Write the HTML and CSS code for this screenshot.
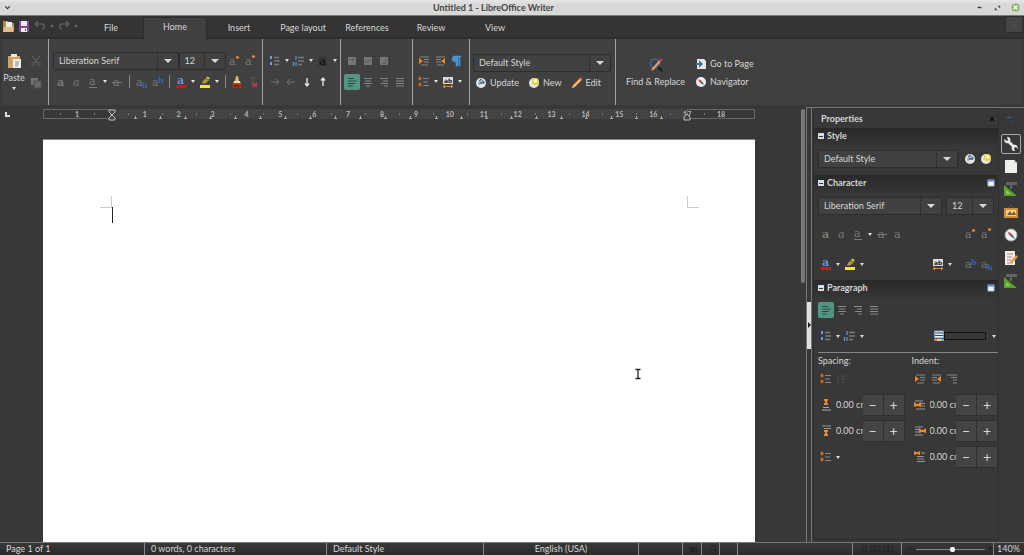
FILE: index.html
```html
<!DOCTYPE html>
<html lang="en">
<head>
<meta charset="utf-8">
<title>Untitled 1 - LibreOffice Writer</title>
<link rel="stylesheet" href="styles.css">
</head>
<body>
<svg class="sprite" aria-hidden="true">
  <symbol id="bold" viewBox="0 0 16 16"><text class="glyph strong" x="4" y="12">a</text></symbol>
  <symbol id="italic" viewBox="0 0 16 16"><text class="glyph slant" x="4" y="12">a</text></symbol>
  <symbol id="under" viewBox="0 0 16 16"><text class="glyph" x="4" y="11">a</text><path d="M4 13.5h8" stroke="#777c78"/></symbol>
  <symbol id="strike" viewBox="0 0 16 16"><text class="glyph" x="4" y="12">a</text><path d="M3 8.5h10" stroke="#777c78"/></symbol>
  <symbol id="plain" viewBox="0 0 16 16"><text class="glyph" x="4" y="12">a</text></symbol>
  <symbol id="sub" viewBox="0 0 16 16"><text class="glyph" x="3" y="12">a</text><text class="small" x="9" y="14">b</text></symbol>
  <symbol id="super" viewBox="0 0 16 16"><text class="glyph" x="3" y="12">a</text><text class="small" x="9" y="9">b</text></symbol>
  <symbol id="grow" viewBox="0 0 16 16"><text class="glyph" x="3" y="12">a</text><path d="M10 5l1.500-2L13 5z" fill="#f08a35" stroke="#f08a35"/></symbol>
  <symbol id="shrink" viewBox="0 0 16 16"><text class="glyph" x="3" y="12">a</text><path d="M10 3h3l-1.500 2z" fill="#f08a35" stroke="#f08a35"/></symbol>
  <symbol id="color" viewBox="0 0 16 16"><text class="glyph blue" x="4" y="10">a</text><path d="M3 11h10v3H3z" fill="#cf171f"/></symbol>
  <symbol id="mark" viewBox="0 0 16 16"><path d="M3 11h10v3H3z" fill="#fcf000"/><path d="M5 10l1-3 3-3 3 2-3 3z" fill="#b09a30"/><path d="M8 5l2-3 3 2-1 3z" fill="#77713f"/><circle cx="11" cy="4" r="1" fill="#f4e34c"/></symbol>
  <symbol id="brush" viewBox="0 0 16 16"><path d="M7 2h2l1 5H6z" fill="#e6b46a"/><path d="M5 7h6l1 3H4z" fill="#e8d9b4"/><path d="M4 9h8v1H4z" fill="#8a5a32"/><path d="M4 10h8l1 4H3z" fill="#b2261e"/><path d="M5 12h5" stroke="#4b1512"/></symbol>
  <symbol id="clear" viewBox="0 0 16 16"><path d="M5 4h6M9 4l-3 8" stroke="#59595b"/><path d="M8 9l4 4m0-4l-4 4" stroke="#c83c55" stroke-width="1.5"/></symbol>
  <symbol id="bullets" viewBox="0 0 16 16"><path d="M3 3h2v3H3zM3 9h2v3H3z" fill="#6f9fd8"/><path d="M7 4.500h5M7 8h6M7 11.500h5" stroke="#777b77" stroke-width="1.300"/></symbol>
  <symbol id="numbers" viewBox="0 0 16 16"><path d="M5 3v4M2.500 9v4M5 9v4" stroke="#5c8fd0" fill="none" stroke-width="1.300"/><path d="M7 4.500h6M7 8h6M7 11.500h4" stroke="#777b77" stroke-width="1.300"/></symbol>
  <symbol id="darka" viewBox="0 0 16 16"><path d="M3 3h9v10H3z" fill="#383838"/><text class="glyph dark" x="4" y="12">a</text></symbol>
  <symbol id="right" viewBox="0 0 16 16"><path d="M4 8h8M9 5l3 3-3 3" stroke="#747474" fill="none"/></symbol>
  <symbol id="left" viewBox="0 0 16 16"><path d="M12 8H4M7 5L4 8l3 3" stroke="#747474" fill="none"/></symbol>
  <symbol id="down" viewBox="0 0 16 16"><path d="M8 4v8M6 9.500L8 12l2-2.500" stroke="#e5e5df" stroke-width="1.400" fill="none"/></symbol>
  <symbol id="up" viewBox="0 0 16 16"><path d="M8 12V4M6 6.500L8 4l2 2.500" stroke="#e5e5df" stroke-width="1.400" fill="none"/></symbol>
  <symbol id="box1" viewBox="0 0 16 16"><path d="M4 4h8v8H4z" fill="#777"/><path d="M5 6.500h4M9.500 5v4" stroke="#606060"/></symbol>
  <symbol id="box2" viewBox="0 0 16 16"><path d="M4 4h8v8H4z" fill="#777"/><path d="M5 7.500h6M5 9.500h4" stroke="#5c5c5c"/></symbol>
  <symbol id="box3" viewBox="0 0 16 16"><path d="M4 4h8v8H4z" fill="#777"/><path d="M6 10.500h4M9.500 6v4" stroke="#5c5c5c"/></symbol>
  <symbol id="aleft" viewBox="0 0 16 16"><path d="M4 4.500h6M4 7h9M4 9.500h7M4 12h5" stroke="currentColor"/></symbol>
  <symbol id="acenter" viewBox="0 0 16 16"><path d="M4 4.500h8M5 7h6M4 9.500h8M6 12h4" stroke="currentColor"/></symbol>
  <symbol id="aright" viewBox="0 0 16 16"><path d="M4 4.500h8M7 7h5M5 9.500h7M8 12h4" stroke="currentColor"/></symbol>
  <symbol id="ajust" viewBox="0 0 16 16"><path d="M4 4.500h8M4 7h8M4 9.500h8M4 12h8" stroke="currentColor"/></symbol>
  <symbol id="indent" viewBox="0 0 16 16"><path d="M4 4h9M8 6.500h5M8 9h5M5 12h7" stroke="#858985"/><path d="M3 5l4 3-4 3z" fill="#f18424"/></symbol>
  <symbol id="outdent" viewBox="0 0 16 16"><path d="M4 4h9M4 6.500h5M4 9h5M5 12h7" stroke="#858985"/><path d="M13 5L9 8l4 3z" fill="#f18424"/></symbol>
  <symbol id="hang" viewBox="0 0 16 16"><path d="M3 4h10M7 6.500h6M9 9h4M9 12h4" stroke="#858985"/></symbol>
  <symbol id="pilcrow" viewBox="0 0 16 16"><path d="M6 3h7v1h-1v9h-1V4h-1v9H8V9C5 9 4 7 4 6s1-3 2-3z" fill="#4896d0" stroke="#4896d0" stroke-width=".6"/></symbol>
  <symbol id="lines" viewBox="0 0 16 16"><path d="M3 3h2v3H3zM3 9h2v3H3zM2 5h4M2 10h4" stroke="#c96a23" fill="#c96a23" stroke-width=".5"/><path d="M7 4.500h6M7 8h5M7 11.500h6" stroke="#858985"/></symbol>
  <symbol id="faint" viewBox="0 0 16 16"><path d="M4 4v8M7 5h4M7 8h5M7 11h3" stroke="#505050"/></symbol>
  <symbol id="charspace" viewBox="0 0 16 16"><path d="M3 3h10v7H3z" fill="#deded8"/><text class="ab" x="4" y="9">ab</text><path d="M3 12.500h10M5 11l-2 1.500L5 14m6-3l2 1.500-2 1.500" stroke="#ed842b" fill="none"/></symbol>
  <symbol id="above" viewBox="0 0 16 16"><path d="M6 2h4v2H9v2h1v2H6V6h1V4H6z" fill="#f28a2d"/><path d="M5 10.500h6M4 13h9" stroke="#aaa"/></symbol>
  <symbol id="below" viewBox="0 0 16 16"><path d="M4 3h9M6 5.500h7" stroke="#999"/><path d="M6 7h4v2H9v2h1v2H6v-2h1V9H6z" fill="#f28a2d"/></symbol>
  <symbol id="before" viewBox="0 0 16 16"><path d="M3 4h8M9 6.500h4M9 9h4M4 12h9" stroke="#999"/><path d="M2 5l3 2h1l3-2v5L6 9H5l-3 1z" fill="#f28a2d"/></symbol>
  <symbol id="after" viewBox="0 0 16 16"><path d="M3 4h8M3 6.500h4M3 9h4M3 12h8" stroke="#999"/><path d="M7 5l3 2h1l3-2v5l-3-1h-1l-3 1z" fill="#f28a2d"/></symbol>
  <symbol id="first" viewBox="0 0 16 16"><path d="M9 4h4M5 7.500h7M5 10h7M5 12.500h8" stroke="#999"/><path d="M2 2l3 1.500L8 2v4L5 5 2 6z" fill="#f28a2d"/></symbol>
  <symbol id="cut" viewBox="0 0 16 16"><path d="M4 3l6 7M12 3l-6 7" stroke="#696969"/><circle cx="5" cy="11" r="1.500" fill="none" stroke="#606060"/><circle cx="11" cy="11" r="1.500" fill="none" stroke="#606060"/></symbol>
  <symbol id="copy" viewBox="0 0 16 16"><path d="M3 3h7v7H3z" fill="#747474"/><path d="M6 6h7v7H6z" fill="#696969" stroke="#515151"/></symbol>
  <symbol id="paste" viewBox="0 0 16 16"><path d="M2 3h12v12H2z" fill="#d4a45e"/><path d="M5 1h6v3H5z" fill="#e8e8e3"/><path d="M7 6h8v9H7z" fill="#eeeeec"/><path d="M9 9h4M9 11h4M9 13h3" stroke="#8b8b87"/></symbol>
  <symbol id="folder" viewBox="0 0 16 16"><path d="M3 3h5l1 2h5v9H3z" fill="#b58b58"/><path d="M6 4h6v6H6z" fill="#efeee7"/><path d="M4 9h10l-1 5H3z" fill="#dfc08d"/></symbol>
  <symbol id="disk" viewBox="0 0 16 16"><path d="M3 3h10v11H3z" fill="#874594"/><path d="M5 3h6v5H5z" fill="#f4eaf5"/><path d="M5 10h6v4H5z" fill="#eee"/><path d="M9 11h1v2H9z" fill="#555"/></symbol>
  <symbol id="undo" viewBox="0 0 16 16"><path d="M6 3L3 6l3 3M3 6h7c3 0 3 5 0 5" stroke="#5d5d5d" stroke-width="1.500" fill="none"/></symbol>
  <symbol id="redo" viewBox="0 0 16 16"><path d="M10 3l3 3-3 3M13 6H6c-3 0-3 5 0 5" stroke="#5d5d5d" stroke-width="1.500" fill="none"/></symbol>
  <symbol id="update" viewBox="0 0 16 16"><circle cx="8" cy="8" r="5" fill="#e7e7e1"/><path d="M8 3l1 4 4-1-2 3H7l-1 2-1-3z" fill="#8ba8c4"/><path d="M6 6c1-2 3-2 4 0l1 2M7 8h4" fill="none" stroke="#31506f"/></symbol>
  <symbol id="new" viewBox="0 0 16 16"><circle cx="8" cy="8" r="5" fill="#e7e7e1"/><circle cx="9.500" cy="6.500" r="3.500" fill="#e9cf31"/><circle cx="9.500" cy="6" r="2" fill="#fffbd2"/></symbol>
  <symbol id="pencil" viewBox="0 0 16 16"><path d="M3 13l1-3 7-7 2 2-7 7z" fill="#f0a04b"/><path d="M5 11l6-6" stroke="#f9d5a3"/><path d="M11 3l1-1 2 2-1 1z" fill="#d54545"/><path d="M3 13l1-2 1 1z" fill="#eee"/></symbol>
  <symbol id="find" viewBox="0 0 16 16"><circle cx="7" cy="6.500" r="4.500" fill="none" stroke="#4562ab" stroke-width="1.500"/><path d="M10 10l4 4" stroke="#171717" stroke-width="2"/><path d="M4 13l8-9" stroke="#eda259" stroke-width="2"/><path d="M12 4l2-2" stroke="#d24439" stroke-width="2"/></symbol>
  <symbol id="goto" viewBox="0 0 16 16"><path d="M4 3h7l2 2v8H4z" fill="#e8e8e3"/><path d="M3 7h3V4l4 4-4 4V9H3z" fill="#3f77a0"/></symbol>
  <symbol id="compass" viewBox="0 0 16 16"><circle cx="8" cy="8" r="6" fill="#efefec" stroke="#aaa"/><path d="M4 4l5 3-2 2z" fill="#d33b38"/><path d="M12 12L7 9l2-2z" fill="#3f638d"/></symbol>
  <symbol id="nav" viewBox="0 0 16 16"><circle cx="8" cy="8" r="5" fill="#efefec"/><path d="M5 5l4 2-2 2z" fill="#d33b38"/><path d="M11 11L7 9l2-2z" fill="#3f638d"/></symbol>
  <symbol id="more" viewBox="0 0 16 16"><path d="M5 5h6v6H5z" fill="#f1f3f7" stroke="#a9c1e4"/><path d="M4.500 4.500h7v2h-7z" fill="#5585c8"/></symbol>
  <symbol id="fill" viewBox="0 0 16 16"><path d="M3.500 3h9v7h-9z" fill="#e9edf2" stroke="#6d9fd1"/><path d="M4 5h8M4 7.500h8" stroke="#394b60"/><path d="M3 11h3v2H3z" fill="#e3735e"/><path d="M6 11h4v2H6z" fill="#e8d657"/><path d="M10 11h3v2h-3z" fill="#60aee0"/></symbol>
  <symbol id="wrench" viewBox="0 0 16 16"><path d="M1 3l3 2 1-1-1-3c3 0 4 2 3 4l4 4c2-1 4 1 4 4l-2-2-2 1 1 3c-3 0-4-2-3-4L5 7C3 8 1 6 1 3z" fill="#e9e9e5"/></symbol>
  <symbol id="page" viewBox="0 0 16 16"><path d="M2 2h9l3 3v10H2z" fill="#eeeeeb"/><path d="M11 2v3h3z" fill="#c7c7c3"/></symbol>
  <symbol id="styles" viewBox="0 0 16 16"><path d="M3 1h11v3H9v4H7V4H3z" fill="#62645f"/><path d="M1 4l13 11H1z" fill="#58a42b"/><path d="M3 9v4h5z" fill="#8bc566"/></symbol>
  <symbol id="gallery" viewBox="0 0 16 16"><path d="M5 4l3-3 3 3" stroke="#555" fill="none"/><path d="M1 4h14v10H1z" fill="#d58c2b"/><path d="M3 6h10v6H3z" fill="#f2d598"/><path d="M4 11l3-4 2 3 2-3 2 4z" fill="#75572d"/></symbol>
  <symbol id="changes" viewBox="0 0 16 16"><path d="M2 1h10v14H2z" fill="#eee"/><path d="M4 4h6M4 7h5M4 10h4M4 13h6" stroke="#d57568"/><path d="M7 12l6-7 2 2-6 6z" fill="#e49944"/></symbol>
  <symbol id="menuarrow" viewBox="0 0 16 16"><path d="M4 5h4v1H4z" fill="#4b689b"/><path d="M7 8h5l-2 3z" fill="#2c4068"/></symbol>
</svg>

<header class="titlebar">
  <button class="winmenu" aria-label="Window menu"><svg viewBox="0 0 8 8"><path d="M2 3l2 2 2-2" stroke="#333" fill="none"/></svg></button>
  <h1>Untitled 1 - LibreOffice Writer</h1>
  <div class="winbtns">
    <button aria-label="Minimize"><svg viewBox="0 0 10 10"><path d="M3 5h4" stroke="#333" stroke-width="1.500"/></svg></button>
    <button aria-label="Restore"><svg viewBox="0 0 10 10"><path d="M5 3h3v3zM2 5v3h3z" fill="#444"/></svg></button>
    <button aria-label="Close"><svg viewBox="0 0 10 10"><circle cx="5" cy="5" r="4.500" fill="#8fb866"/><path d="M3 3l4 4m0-4L3 7" stroke="#fff" stroke-width="1.400"/></svg></button>
  </div>
</header>

<nav class="tabbar">
  <div class="quick">
    <button aria-label="Open"><svg class="ic"><use href="#folder"/></svg></button>
    <button aria-label="Save"><svg class="ic"><use href="#disk"/></svg></button>
    <button aria-label="Undo"><svg class="ic"><use href="#undo"/></svg></button><i class="caret dim"></i>
    <button aria-label="Redo"><svg class="ic"><use href="#redo"/></svg></button><i class="caret dim"></i>
  </div>
  <button class="tab">File</button>
  <button class="tab active">Home</button>
  <button class="tab">Insert</button>
  <button class="tab">Page layout</button>
  <button class="tab">References</button>
  <button class="tab">Review</button>
  <button class="tab">View</button>
  <button class="hamburger" aria-label="Menu"><svg viewBox="0 0 16 16"><path d="M4 5h8M4 8h8M4 11h8" stroke="#525252"/></svg></button>
</nav>

<section class="ribbon">
  <div class="group clip">
    <button class="paste"><svg class="ic"><use href="#paste"/></svg>Paste<i class="caret"></i></button>
    <div class="stack">
      <button aria-label="Cut"><svg class="ic"><use href="#cut"/></svg></button>
      <button aria-label="Copy"><svg class="ic"><use href="#copy"/></svg></button>
    </div>
  </div>
  <div class="group font">
    <div class="row">
      <span class="combo name"><select aria-label="Font name"><option>Liberation Serif</option></select></span>
      <span class="combo size"><select aria-label="Font size"><option>12</option></select></span>
      <button aria-label="Grow"><svg class="ic"><use href="#grow"/></svg></button>
      <button aria-label="Shrink"><svg class="ic"><use href="#shrink"/></svg></button>
    </div>
    <div class="row">
      <button aria-label="Bold"><svg class="ic"><use href="#bold"/></svg></button>
      <button aria-label="Italic"><svg class="ic"><use href="#italic"/></svg></button>
      <button aria-label="Underline"><svg class="ic"><use href="#under"/></svg></button><i class="caret"></i>
      <button aria-label="Strikethrough"><svg class="ic"><use href="#strike"/></svg></button><i class="bar"></i>
      <button aria-label="Subscript"><svg class="ic"><use href="#sub"/></svg></button>
      <button aria-label="Superscript"><svg class="ic"><use href="#super"/></svg></button><i class="bar"></i>
      <button aria-label="Font color"><svg class="ic"><use href="#color"/></svg></button><i class="caret"></i>
      <button aria-label="Highlight"><svg class="ic"><use href="#mark"/></svg></button><i class="caret"></i><i class="bar"></i>
      <button aria-label="Clone"><svg class="ic"><use href="#brush"/></svg></button>
      <button aria-label="Clear"><svg class="ic"><use href="#clear"/></svg></button>
    </div>
  </div>
  <div class="group">
    <div class="row">
      <button aria-label="Bullets"><svg class="ic"><use href="#bullets"/></svg></button><i class="caret"></i>
      <button aria-label="Numbering"><svg class="ic"><use href="#numbers"/></svg></button><i class="caret"></i>
      <button aria-label="Outline"><svg class="ic"><use href="#darka"/></svg></button><i class="caret"></i>
    </div>
    <div class="row">
      <button aria-label="Demote"><svg class="ic"><use href="#right"/></svg></button>
      <button aria-label="Promote"><svg class="ic"><use href="#left"/></svg></button>
      <button aria-label="Move down"><svg class="ic"><use href="#down"/></svg></button>
      <button aria-label="Move up"><svg class="ic"><use href="#up"/></svg></button>
    </div>
  </div>
  <div class="group">
    <div class="row">
      <button aria-label="Top"><svg class="ic"><use href="#box1"/></svg></button>
      <button aria-label="Middle"><svg class="ic"><use href="#box2"/></svg></button>
      <button aria-label="Bottom"><svg class="ic"><use href="#box3"/></svg></button>
    </div>
    <div class="row">
      <button class="on" aria-label="Align left"><svg class="ic"><use href="#aleft"/></svg></button>
      <button aria-label="Center"><svg class="ic"><use href="#acenter"/></svg></button>
      <button aria-label="Align right"><svg class="ic"><use href="#aright"/></svg></button>
      <button aria-label="Justify"><svg class="ic"><use href="#ajust"/></svg></button>
    </div>
  </div>
  <div class="group">
    <div class="row">
      <button aria-label="Indent"><svg class="ic"><use href="#indent"/></svg></button>
      <button aria-label="Outdent"><svg class="ic"><use href="#outdent"/></svg></button>
      <button aria-label="Formatting marks"><svg class="ic"><use href="#pilcrow"/></svg></button>
    </div>
    <div class="row">
      <button aria-label="Line spacing"><svg class="ic"><use href="#lines"/></svg></button><i class="caret"></i>
      <button aria-label="Character spacing"><svg class="ic"><use href="#charspace"/></svg></button><i class="caret"></i>
    </div>
  </div>
  <div class="group style">
    <span class="combo"><select aria-label="Paragraph style"><option>Default Style</option></select></span>
    <div class="row spread">
      <button class="text"><svg class="ic"><use href="#update"/></svg>Update</button>
      <button class="text"><svg class="ic"><use href="#new"/></svg>New</button>
      <button class="text"><svg class="ic"><use href="#pencil"/></svg>Edit</button>
    </div>
  </div>
  <div class="group tools">
    <button class="find"><svg class="ic"><use href="#find"/></svg>Find &amp; Replace</button>
    <div class="links">
      <button class="text"><svg class="ic"><use href="#goto"/></svg>Go to Page</button>
      <button class="text"><svg class="ic"><use href="#nav"/></svg>Navigator</button>
    </div>
  </div>
</section>

<main class="work">
  <section class="doc">
    <svg class="corner" viewBox="0 0 8 8"><path d="M2 1v4h4" stroke="#ddd" stroke-width="2" fill="none"/></svg>
    <div class="ruler">
      <div class="scale"><b>1</b><b></b><b>1</b><b>2</b><b>3</b><b>4</b><b>5</b><b>6</b><b>7</b><b>8</b><b>9</b><b>10</b><b>11</b><b>12</b><b>13</b><b>14</b><b>15</b><b>16</b><b>17</b><b>18</b></div>
      <div class="outer before"></div>
      <div class="stops"><i></i><i></i><i></i><i></i><i></i><i></i><i></i><i></i><i></i><i></i><i></i><i></i><i></i><i></i><i></i><i></i><i></i><i></i><i></i><i></i><i></i><i></i><i class="last"></i></div>
      <div class="outer behind"></div>
      <svg class="hand start" viewBox="0 0 8 12"><path d="M1 1h6v2L1 9v2h6V9L1 3z" fill="#444" stroke="#bbb"/></svg>
      <svg class="hand end" viewBox="0 0 8 12"><path d="M1 11h6V8L4 5 1 8z" fill="#444" stroke="#bbb"/></svg>
    </div>
    <article class="paper" aria-label="Document">
      <i class="crop tl"></i><i class="crop tr"></i><i class="cursor"></i>
      <svg class="pointer" viewBox="0 0 8 12"><path d="M1.500 1.500h2l.5.500.5-.5h2M4 2v8M1.500 10.500h2l.5-.5.5.500h2" stroke="#222" stroke-width="1.300" fill="none"/></svg>
    </article>
  </section>
  <div class="scroll"><i></i></div>
  <div class="splitter"><button aria-label="Hide sidebar"></button></div>
  <aside class="side">
    <div class="panel">
      <header class="ptitle"><h2>Properties</h2><button aria-label="Close sidebar"><svg viewBox="0 0 8 8"><path d="M2 2l4 4m0-4L2 6" stroke="#111" stroke-width="1.500"/></svg></button></header>
      <h3><i class="fold"></i>Style</h3>
      <div class="line styleline">
        <span class="combo wide"><select aria-label="Style"><option>Default Style</option></select></span>
        <button aria-label="Update style"><svg class="ic"><use href="#update"/></svg></button>
        <button aria-label="New style"><svg class="ic"><use href="#new"/></svg></button>
      </div>
      <h3><i class="fold"></i>Character<svg class="ic"><use href="#more"/></svg></h3>
      <div class="line fontline">
        <span class="combo wide"><select aria-label="Font"><option>Liberation Serif</option></select></span>
        <span class="combo size"><select aria-label="Size"><option>12</option></select></span>
      </div>
      <div class="line icons">
        <button aria-label="Bold"><svg class="ic"><use href="#bold"/></svg></button>
        <button aria-label="Italic"><svg class="ic"><use href="#italic"/></svg></button>
        <button aria-label="Underline"><svg class="ic"><use href="#under"/></svg></button><i class="caret"></i>
        <button aria-label="Strikethrough"><svg class="ic"><use href="#strike"/></svg></button>
        <button aria-label="Shadow"><svg class="ic"><use href="#plain"/></svg></button>
        <button class="push" aria-label="Grow"><svg class="ic"><use href="#grow"/></svg></button>
        <button aria-label="Shrink"><svg class="ic"><use href="#shrink"/></svg></button>
      </div>
      <div class="line icons">
        <button aria-label="Font color"><svg class="ic"><use href="#color"/></svg></button><i class="caret"></i>
        <button aria-label="Highlight"><svg class="ic"><use href="#mark"/></svg></button><i class="caret"></i>
        <button class="push" aria-label="Spacing"><svg class="ic"><use href="#charspace"/></svg></button><i class="caret after"></i>
        <button aria-label="Superscript"><svg class="ic"><use href="#super"/></svg></button>
        <button aria-label="Subscript"><svg class="ic"><use href="#sub"/></svg></button>
      </div>
      <h3><i class="fold"></i>Paragraph<svg class="ic"><use href="#more"/></svg></h3>
      <div class="line para">
        <button class="on" aria-label="Align left"><svg class="ic"><use href="#aleft"/></svg></button>
        <button aria-label="Center"><svg class="ic"><use href="#acenter"/></svg></button>
        <button aria-label="Align right"><svg class="ic"><use href="#aright"/></svg></button>
        <button aria-label="Justify"><svg class="ic"><use href="#ajust"/></svg></button>
      </div>
      <div class="line para lists">
        <button aria-label="Bullets"><svg class="ic"><use href="#bullets"/></svg></button><i class="caret"></i>
        <button aria-label="Numbering"><svg class="ic"><use href="#numbers"/></svg></button><i class="caret"></i>
        <button class="push" aria-label="Background color"><svg class="ic"><use href="#fill"/></svg></button><i class="swatch"></i><i class="caret"></i>
      </div>
      <div class="spacing">
        <div class="col">
          <p>Spacing:</p>
          <div class="mini"><svg class="ic"><use href="#lines"/></svg><svg class="ic"><use href="#faint"/></svg></div>
          <div class="spin"><svg class="ic"><use href="#above"/></svg><input aria-label="Above" value="0.00 cm"><button>−</button><button>+</button></div>
          <div class="spin"><svg class="ic"><use href="#below"/></svg><input aria-label="Below" value="0.00 cm"><button>−</button><button>+</button></div>
          <div class="mini ls"><svg class="ic"><use href="#lines"/></svg><i class="caret"></i></div>
        </div>
        <div class="col">
          <p>Indent:</p>
          <div class="mini"><svg class="ic"><use href="#indent"/></svg><svg class="ic"><use href="#outdent"/></svg><svg class="ic"><use href="#hang"/></svg></div>
          <div class="spin"><svg class="ic"><use href="#before"/></svg><input aria-label="Before" value="0.00 cm"><button>−</button><button>+</button></div>
          <div class="spin"><svg class="ic"><use href="#after"/></svg><input aria-label="After" value="0.00 cm"><button>−</button><button>+</button></div>
          <div class="spin"><svg class="ic"><use href="#first"/></svg><input aria-label="First line" value="0.00 cm"><button>−</button><button>+</button></div>
        </div>
      </div>
    </div>
    <nav class="deck">
      <button aria-label="Settings"><svg class="ic"><use href="#menuarrow"/></svg></button>
      <button class="sel" aria-label="Properties"><svg class="ic"><use href="#wrench"/></svg></button>
      <button aria-label="Page"><svg class="ic"><use href="#page"/></svg></button>
      <button aria-label="Styles"><svg class="ic"><use href="#styles"/></svg></button>
      <button aria-label="Gallery"><svg class="ic"><use href="#gallery"/></svg></button>
      <button aria-label="Navigator"><svg class="ic"><use href="#compass"/></svg></button>
      <button aria-label="Changes"><svg class="ic"><use href="#changes"/></svg></button>
      <button aria-label="Design"><svg class="ic"><use href="#styles"/></svg></button>
    </nav>
  </aside>
</main>

<footer class="status">
  <span>Page 1 of 1</span>
  <span>0 words, 0 characters</span>
  <span>Default Style</span>
  <span class="mid">English (USA)</span>
  <span></span>
  <span><svg viewBox="0 0 10 10"><path d="M1 3h5v5H1zM8 2v7" fill="#222" stroke="#222"/></svg></span>
  <span><svg viewBox="0 0 10 10"><path d="M2 1h6v8H2zM4 5h5" fill="none" stroke="#242424"/></svg></span>
  <span></span>
  <span></span>
  <span class="views"><svg viewBox="0 0 36 10"><path d="M2 1h4v7H2zM11 1h4v7h-4zM17 1h4v7h-4zM26 1h4v7h-4zM31 1h4v7h-4z" fill="none" stroke="#222"/></svg></span>
  <span class="zoom"><i>−</i><input type="range" aria-label="Zoom" min="0" max="100" value="53"><i>+</i></span>
  <span>140%</span>
</footer>
</body>
</html>
```

FILE: styles.css
```css
* { box-sizing: border-box; }
body {
  margin: 0;
  height: 100vh;
  display: flex;
  flex-direction: column;
  overflow: hidden;
  background: #383838;
  color: #d6d6d6;
  font: 9px/14px Lato, "Open Sans", sans-serif;
}
button, input, select { font: inherit; color: inherit; }
button { border: 0; padding: 0; margin: 0; background: none; display: flex; align-items: center; justify-content: center; }
h1, h2, h3, p { margin: 0; font-size: inherit; }
i { font-style: normal; }
svg { display: block; }
.sprite { display: none; }
.ic { width: 16px; height: 16px; flex: none; color: #858985; }

.glyph { font: 11px "DejaVu Serif", serif; fill: #777c78; }
.strong { font-weight: bold; }
.slant { font-style: italic; }
.blue { fill: #5e97d8; font-weight: bold; }
.dark { fill: #171717; font-weight: bold; }
.small { font: bold 8px "DejaVu Serif", serif; fill: #3264ad; }
.ab { font: bold 6px "DejaVu Sans", sans-serif; fill: #222; }

.caret { width: 8px; flex: none; display: grid; place-items: center; }
.caret::before { content: ""; border: 2px solid transparent; border-top: 3px solid #e0e0e0; border-bottom: 0; }
.caret.dim::before { border-top-color: #666; }
.bar { width: 8px; height: 13px; flex: none; background: linear-gradient(#888, #888) center / 1px 100% no-repeat; }

.titlebar { flex: none; height: 16px; display: grid; grid-template-columns: 60px 1fr 60px; align-items: center; padding: 0 4px 0 3px; background: linear-gradient(#e6e6e6, #d8d8d8 30%); border-bottom: 1px solid #747d74; color: #444; }
.titlebar h1 { text-align: center; font-weight: 700; padding: 1px 36px 0 0; }
.titlebar svg { width: 9px; height: 9px; }
.winmenu { justify-self: start; }
.winbtns { display: flex; justify-content: flex-end; gap: 9px; }

.tabbar { flex: none; height: 23px; display: flex; background: #343434; border-bottom: 2px solid #2c2c2c; }
.quick { width: 79px; display: flex; align-items: center; flex: none; height: 20px; }
.tab { width: 64px; flex: none; padding-top: 2px; }
.tab.active { background: #404040; border: 1px solid #2b2b2b; border-bottom: 0; margin: 1px 0 -2px; padding: 0 0 3px; }
.hamburger { margin-left: auto; margin-right: 1px; width: 18px; height: 17px; background: #454545; border: 1px solid #2d2d2d; }
.hamburger svg { width: 14px; }

.ribbon { flex: none; height: 66px; display: flex; background: #404040; margin: 0 2px; }
.group { flex: none; padding: 13px 4px 0; border-right: 1px solid #a2a2a2; display: flex; flex-direction: column; gap: 4px; }
.row { display: flex; align-items: center; height: 17px; }
.combo { display: grid; height: 18px; min-width: 0; border: 1px solid #2d2d2d; border-radius: 2px; background: #414141; }
.combo select { grid-area: 1 / 1; appearance: none; background: none; border: 0; margin: 0; padding: 0 18px 0 5px; min-width: 0; width: 100%; outline: 0; }
.combo::before { content: ""; grid-area: 1 / 1; justify-self: end; width: 20px; border-left: 1px solid #303030; }
.combo::after { content: ""; grid-area: 1 / 1; justify-self: end; align-self: center; margin-right: 6px; border: 4px solid transparent; border-top-color: #d8d8d8; border-bottom: 0; pointer-events: none; }
.clip { width: 47px; flex-direction: row; padding: 14px 3px 0 0; gap: 2px; }
.paste { flex-direction: column; justify-content: flex-start; width: 24px; gap: 2px; }
.paste .caret { height: 3px; }
.stack { display: flex; flex-direction: column; gap: 6px; }
.font { width: 214px; }
.name { width: 127px; }
.size { width: 48px; }
.on { background: #539583; border-radius: 2px; }
.on .ic { color: #304c44; }
.ribbon .group:nth-child(3) { width: 78px; }
.ribbon .group:nth-child(4) { width: 72px; padding-left: 3px; }
.ribbon .group:nth-child(5) { width: 57px; padding-left: 3px; }
.style { width: 146px; padding: 15px 4px 0 3px; gap: 2px; }
.spread { justify-content: space-between; padding-right: 10px; }
.text { gap: 1px; }
.tools { border: 0; flex-direction: row; gap: 8px; padding: 17px 10px 0; }
.find { flex-direction: column; justify-content: flex-start; gap: 2px; }
.find .ic { margin-top: 1px; }
.links { display: flex; flex-direction: column; gap: 2px; align-items: flex-start; }

.work { flex: 1; min-height: 0; display: flex; padding-top: 2px; }
.doc { flex: 1; min-width: 0; display: grid; grid-template: 30px 1fr / 43px minmax(0, 1fr); padding: 2px 45px 0 0; }
.corner { width: 8px; height: 8px; margin: 2px 0 0 4px; }
.ruler { display: grid; grid-template: 10px / 68px minmax(0, 1fr) 68px; align-content: start; background: linear-gradient(#434343, #434343) top / calc(100% - 136px) 10px no-repeat; }
.scale { grid-area: 1 / 1 / 2 / 4; display: grid; grid-template-columns: repeat(20, minmax(0, 1fr)); margin: 0 17px; color: #b8b8b8; }
.scale b { font-size: 7px; line-height: 10px; font-weight: 700; text-align: center; background: linear-gradient(#777, #777) left center / 1px 2px no-repeat; }
.outer { grid-row: 1; border: 1px solid #686868; }
.before { grid-column: 1; }
.behind { grid-column: 3; }
.stops { grid-area: 1 / 2; display: grid; grid-template-columns: repeat(23, minmax(0, 1fr)); align-items: end; }
.stops i { height: 3px; background: linear-gradient(#aaa, #aaa) center top / 1px 100% no-repeat, linear-gradient(#aaa, #aaa) center bottom / 3px 1px no-repeat; margin-right: -12px; margin-left: 12px; }
.stops .last { visibility: hidden; }
.hand { width: 8px; height: 12px; grid-row: 1; }
.start { grid-column: 1; justify-self: end; margin-right: -5px; }
.end { grid-column: 3; margin-left: -4px; }
.paper { grid-column: 2; background: #fff; border-top: 1px solid #858585; position: relative; }
.crop { position: absolute; top: 56px; width: 12px; height: 12px; border-bottom: 1px solid #ccc; }
.tl { left: 57px; border-right: 1px solid #ccc; }
.tr { right: 56px; border-left: 1px solid #ccc; }
.cursor { position: absolute; left: 69px; top: 67px; width: 1px; height: 16px; background: #222; }
.pointer { position: absolute; left: 591px; top: 228px; width: 8px; height: 12px; }

.scroll { width: 6px; flex: none; }
.scroll i { display: block; width: 4px; height: 40%; margin: 2px 0 0 1px; background: #787878; border-radius: 2px; }
.splitter { width: 6px; flex: none; display: grid; align-items: center; border: solid #777; border-width: 1px 1px 0; }
.splitter button { height: 47px; background: #e0e0e0; }
.splitter button::before { content: ""; border: 3px solid transparent; border-left-color: #222; border-right: 0; }
.side { width: 212px; flex: none; display: flex; border-top: 1px solid #777; }
.panel { flex: 1; min-width: 0; margin: 0 0 2px 1px; border: 1px solid #303030; }
.ptitle { height: 19px; display: flex; align-items: center; justify-content: space-between; padding: 0 2px 0 7px; }
.ptitle svg { width: 8px; height: 8px; }
.panel h3 { height: 18px; display: flex; align-items: center; padding: 0 0 2px 4px; gap: 3px; background: linear-gradient(#292929, #363636); font-weight: 700; }
.panel h3 .ic { margin-left: auto; margin-right: -1px; }
.fold { width: 6px; height: 6px; background: linear-gradient(#333, #333) center / 4px 1px no-repeat #d7dde4; }
.line { display: flex; align-items: center; padding-left: 4px; }
.wide { flex: 1; }
.styleline { height: 29px; padding-right: 4px; padding-bottom: 4px; }
.styleline .wide { margin-right: 4px; }
.fontline { height: 27px; gap: 4px; padding-right: 4px; padding-bottom: 2px; }
.icons { height: 30px; padding-right: 4px; padding-bottom: 2px; }
.push { margin-left: auto; }
.after { margin-right: 8px; }
.para { height: 26px; padding-bottom: 2px; }
.swatch { width: 42px; height: 8px; border: 1px solid #151515; margin-left: -3px; }
.lists { margin-bottom: 2px; }
.lists .caret:last-child { margin-left: 4px; }
.spacing { display: grid; grid-template-columns: 1fr 1fr; gap: 7px; border-top: 1px solid #858585; margin-left: 4px; padding-top: 2px; }
.col { display: flex; flex-direction: column; gap: 4px; min-width: 0; }
.col p { line-height: 12px; }
.mini { display: flex; height: 16px; align-items: center; margin-bottom: 3px; }
.ls { height: 22px; }
.spin { display: flex; align-items: center; height: 22px; }
.spin input { flex: 1; width: 0; min-width: 0; border: 0; padding: 0 0 0 2px; background: none; outline: 0; }
.spin button { width: 21px; height: 22px; flex: none; background: #444; border: 1px solid #303030; border-left-width: 0; font-size: 14px; }
.deck { width: 25px; flex: none; display: flex; flex-direction: column; gap: 2px; padding-top: 2px; }
.deck button { height: 20px; margin: 0 3px 0 2px; border: 1px solid transparent; }
.deck .sel { border-color: #aaa; border-radius: 2px; }
.deck button:first-child { margin-bottom: 2px; }
.deck button:nth-child(n+3) { margin-bottom: 1px; }

.status { flex: none; height: 13px; display: grid; grid-template-columns: 145fr 182fr 157fr 155fr 44fr 19fr 18fr 18fr 115fr 49fr 92fr 30fr; background: linear-gradient(#383838, #2b2b2b); border-top: 1px solid #777; }
.status > span { min-width: 0; white-space: nowrap; line-height: 12px; padding-left: 6px; border-right: 1px solid #888; display: flex; align-items: center; overflow: hidden; }
.status > span:last-child { border: 0; padding-left: 3px; }
.status .mid { justify-content: center; padding: 0; }
.status svg { height: 9px; width: 10px; }
.status .views svg { width: 36px; }
.zoom i { color: #181818; }
.zoom input { appearance: none; flex: 1; width: 0; margin: 0 3px; height: 8px; background: linear-gradient(#888, #888) center / 100% 1px no-repeat; }
.zoom input::-webkit-slider-thumb { appearance: none; width: 5px; height: 5px; border-radius: 2px; background: #fff; }
```
